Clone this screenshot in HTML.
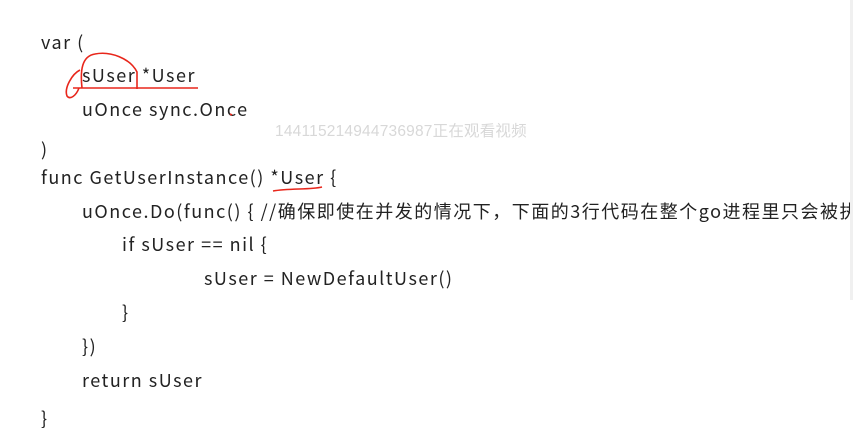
<!DOCTYPE html>
<html><head><meta charset="utf-8"><style>
body{margin:0;width:853px;height:448px;background:#fff;overflow:hidden;position:relative;font-family:"Noto Sans CJK SC","Liberation Sans",sans-serif;color:#222;}
.l{position:absolute;font-size:18px;line-height:24px;white-space:nowrap;letter-spacing:1.5px}
.wm{position:absolute;left:275px;top:119px;font-size:15.5px;color:#d8d8d8;font-family:"Liberation Sans","Noto Sans CJK SC",sans-serif;white-space:nowrap;letter-spacing:0.2px}
.clip{position:absolute;left:0;top:0;width:853px;height:448px;overflow:hidden}
</style></head><body>
<div class="l" style="left:41px;top:30px">var (</div>
<div class="l" style="left:82px;top:63px">sUser *User</div>
<div class="l" style="left:82px;top:97px">uOnce sync.Once</div>
<div class="wm">144115214944736987正在观看视频</div>
<div class="l" style="left:41px;top:137px">)</div>
<div class="l" style="left:41px;top:165px">func GetUserInstance() *User {</div>
<div class="clip"><div class="l" style="left:82px;top:199px;letter-spacing:1.5px">uOnce.Do(func() { //确保即使在并发的情况下，下面的3行代码在整个go进程里只会被执</div></div>
<div class="l" style="left:122px;top:232px">if sUser == nil {</div>
<div class="l" style="left:204px;top:266px">sUser = NewDefaultUser()</div>
<div class="l" style="left:122px;top:300px">}</div>
<div class="l" style="left:82px;top:334px">})</div>
<div class="l" style="left:82px;top:368px">return sUser</div>
<div class="l" style="left:41px;top:406px">}</div>
<div style="position:absolute;right:0;top:0;width:3px;height:300px;background:#f0f0f0"></div>
<svg width="853" height="448" style="position:absolute;left:0;top:0" fill="none" stroke="#e8261b" stroke-width="1.6">
<path d="M73 88 L198 88"/>
<path d="M82 88 C80 70 82 56 95 54 C110 51 130 58 137 72 L137 89"/>
<path d="M80 70 C72 74 64 88 67 96 C70 100 76 96 79 88"/>
<path d="M273 191 C290 188 310 190 322 187"/>
<path d="M230 114 L232 115"/>
</svg>
</body></html>
